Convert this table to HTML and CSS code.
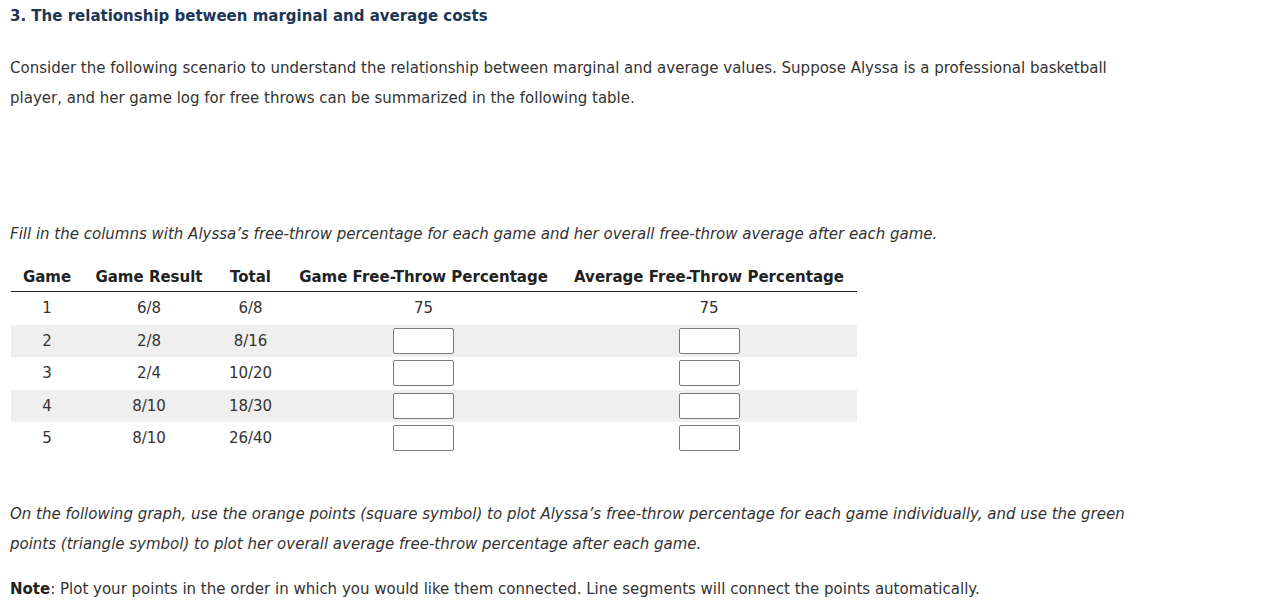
FILE: index.html
```html
<!DOCTYPE html>
<html>
<head>
<meta charset="utf-8">
<link rel="stylesheet" href="styles.css">
</head>
<body>
<div class="page">
  <h2 class="title">3. The relationship between marginal and average costs</h2>
  <p class="intro">Consider the following scenario to understand the relationship between marginal and average values. Suppose Alyssa is a professional basketball player, and her game log for free throws can be summarized in the following table.</p>
  <p class="instr">Fill in the columns with Alyssa’s free-throw percentage for each game and her overall free-throw average after each game.</p>
  <table class="log">
    <thead>
      <tr><th class="c1">Game</th><th class="c2">Game Result</th><th class="c3">Total</th><th class="c4">Game Free-Throw Percentage</th><th class="c5">Average Free-Throw Percentage</th></tr>
    </thead>
    <tbody>
      <tr><td>1</td><td>6/8</td><td>6/8</td><td>75</td><td>75</td></tr>
      <tr class="alt"><td>2</td><td>2/8</td><td>8/16</td><td><input class="box" type="text"></td><td><input class="box" type="text"></td></tr>
      <tr><td>3</td><td>2/4</td><td>10/20</td><td><input class="box" type="text"></td><td><input class="box" type="text"></td></tr>
      <tr class="alt"><td>4</td><td>8/10</td><td>18/30</td><td><input class="box" type="text"></td><td><input class="box" type="text"></td></tr>
      <tr><td>5</td><td>8/10</td><td>26/40</td><td><input class="box" type="text"></td><td><input class="box" type="text"></td></tr>
    </tbody>
  </table>
  <p class="graph">On the following graph, use the orange points (square symbol) to plot Alyssa’s free-throw percentage for each game individually, and use the green points (triangle symbol) to plot her overall average free-throw percentage after each game.</p>
  <p class="note"><b>Note</b>: Plot your points in the order in which you would like them connected. Line segments will connect the points automatically.</p>
</div>
</body>
</html>
```
FILE: styles.css
```css
html, body {
  margin: 0;
  padding: 0;
  background: #ffffff;
}
body {
  font-family: "DejaVu Sans", Verdana, sans-serif;
  font-size: 15px;
  color: #333333;
}
.page {
  padding: 7px 10px 0 10px;
}
.title {
  margin: 0;
  font-size: 15px;
  line-height: 18px;
  font-weight: bold;
  color: #1b3553;
}
.intro {
  margin: 28px 0 0 0;
  line-height: 30px;
  width: 1120px;
}
.instr {
  margin: 106px 0 0 0;
  line-height: 30px;
  font-style: italic;
}
.log {
  border-collapse: collapse;
  table-layout: fixed;
  width: 846px;
  margin: 13px 0 0 1px;
}
.log th {
  font-weight: bold;
  color: #222222;
  padding: 0;
  height: 29px;
  border-bottom: 1px solid #222222;
  white-space: nowrap;
  text-align: center;
}
.log .c1 { width: 72px; }
.log .c2 { width: 132px; }
.log .c3 { width: 71px; }
.log .c4 { width: 275px; }
.log .c5 { width: 296px; }
.log td {
  text-align: center;
  height: 32.5px;
  padding: 0;
}
.log tr.alt td {
  background: #efefef;
}
.box {
  display: inline-block;
  vertical-align: middle;
  width: 61px;
  height: 26px;
  box-sizing: border-box;
  border: 1px solid #7a7a7a;
  border-radius: 2px;
  background: #ffffff;
  margin: 0;
  padding: 0;
}
.graph {
  margin: 44px 0 0 0;
  line-height: 30px;
  font-style: italic;
  width: 1140px;
}
.note {
  margin: 15px 0 0 0;
  line-height: 30px;
}
.note b {
  color: #222222;
}
```
